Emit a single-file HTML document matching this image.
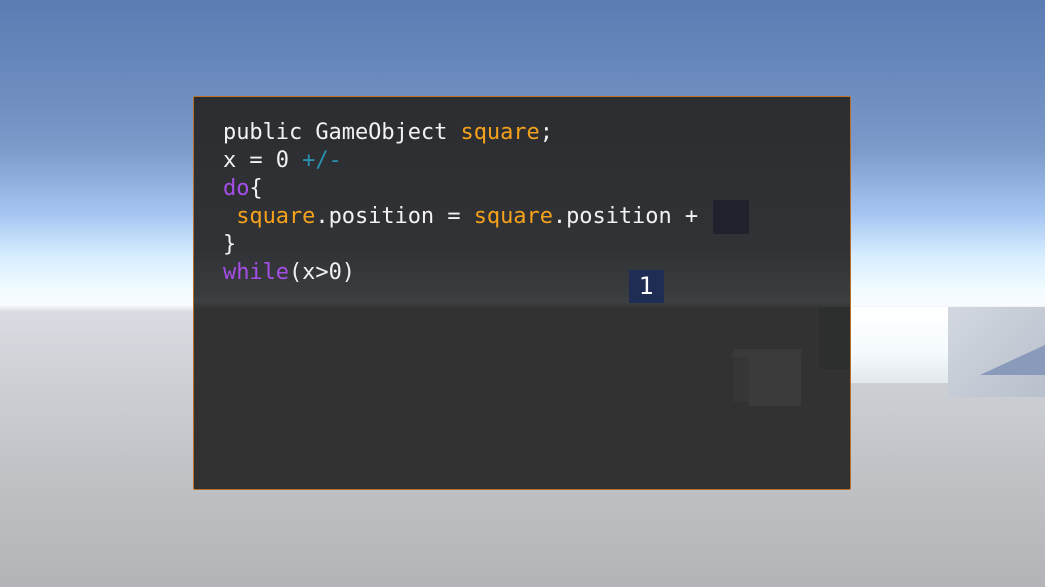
<!DOCTYPE html>
<html><head><style>
html,body{margin:0;padding:0;}
body{width:1045px;height:587px;position:relative;overflow:hidden;
background:linear-gradient(to bottom,#5b7bb3 0px,#6b8abd 80px,#7c9bcb 150px,#a6c6f2 215px,#d6ecff 255px,#f2fbff 290px,#f8fcff 305px,#d8dce2 312px,#cdd0d5 380px,#bfc1c5 480px,#b3b4b8 587px);
font-family:"DejaVu Sans Mono","Liberation Mono",monospace;}
.wall{position:absolute;left:851px;top:307px;width:97px;height:76px;background:linear-gradient(to bottom,#ffffff,#f4fafe 60%,#e3e8ec);}
.wall2{position:absolute;left:948px;top:307px;width:97px;height:90px;background:linear-gradient(135deg,#d3d8e0,#b8c0cc);}
.ramp{position:absolute;left:980px;top:345px;width:0;height:0;border-left:65px solid transparent;border-bottom:30px solid #8a9abb;}
.panel{position:absolute;left:193px;top:96px;width:656px;height:392px;border:1px solid #b8702a;border-radius:2px;
background:linear-gradient(to bottom,#2c2d31 0px,#303235 150px,#3a3d3e 200px,#3d4040 205px,#323232 212px,#313131 392px);overflow:hidden;}
.cube{position:absolute;left:555px;top:258px;width:52px;height:51px;background:#3b3b3b;}
.top{position:absolute;left:539px;top:252px;width:68px;height:8px;background:#3a3a3a;transform:skewX(-30deg);}
.cube2{position:absolute;left:539px;top:255px;width:18px;height:50px;background:#363636;}
.wallin{position:absolute;left:625px;top:210px;width:31px;height:62px;background:#2d2e2e;}
pre{position:absolute;left:29px;top:22px;margin:0;font-size:22px;line-height:28px;color:#f2f2f2;font-family:inherit;letter-spacing:-0.05px;}
.o{color:#f4a21c}.p{color:#a64ee8}.b{color:#2a8fb0}
.sq{position:absolute;left:519px;top:103px;width:36px;height:34px;background:#1f222c;}
.one{position:absolute;left:435px;top:173px;width:35px;height:33px;background:#1f2d55;color:#fff;font-size:24px;text-align:center;line-height:33px;font-family:"DejaVu Sans",sans-serif;}
</style></head><body>
<div class="wall2"></div><div class="ramp"></div><div class="wall"></div>
<div class="panel">
<div class="wallin"></div><div class="cube2"></div><div class="top"></div><div class="cube"></div>
<pre>public GameObject <span class="o">square</span>;
x = 0 <span class="b">+/-</span>
<span class="p">do</span>{
 <span class="o">square</span>.position = <span class="o">square</span>.position +
}
<span class="p">while</span>(x&gt;0)</pre>
<div class="sq"></div>
<div class="one">1</div>
</div>
</body></html>
